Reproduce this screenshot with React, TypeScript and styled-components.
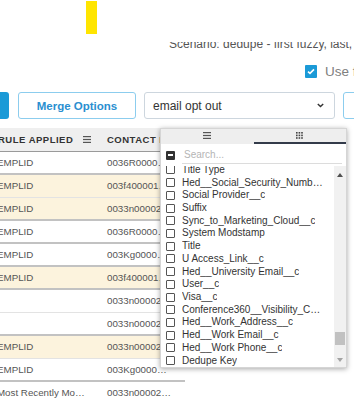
import React from 'react';
import styled, { createGlobalStyle } from 'styled-components';

const GlobalStyle = createGlobalStyle`
  html, body {
    margin: 0;
    padding: 0;
    background: #fff;
    overflow: hidden;
  }
  body {
    font-family: "Liberation Sans", Arial, sans-serif;
  }
`;

const Page = styled.div`
  position: relative;
  width: 354px;
  height: 400px;
  overflow: hidden;
`;

const TopArea = styled.div`
  height: 92px;
  display: flex;
  flex-direction: column;
`;

const Highlight = styled.div`
  margin: 1px 0 0 86px;
  width: 11px;
  height: 33px;
  background: #ffe500;
`;

const ScenarioClip = styled.div`
  margin: 8px 0 0 169px;
  height: 9px;
  overflow: hidden;
  white-space: nowrap;
`;

const ScenarioText = styled.div`
  margin-top: -5px;
  font-size: 12px;
  line-height: 14px;
  color: #555;
`;

const OptionRow = styled.label`
  display: flex;
  align-items: center;
  margin: 13px 0 0 305px;
  height: 14px;
  white-space: nowrap;
`;

const CheckBox = styled.span`
  flex-shrink: 0;
  width: 12px;
  height: 13px;
  border-radius: 1px;
  background: #1b9ad7;
  display: flex;
  align-items: center;
  justify-content: center;
`;

const OptionLabel = styled.span`
  margin-left: 8px;
  font-size: 13.5px;
  color: #808080;
`;

const Toolbar = styled.div`
  display: flex;
  gap: 8px;
  height: 27px;
  white-space: nowrap;
`;

const PrimaryStub = styled.div`
  flex-shrink: 0;
  width: 9px;
  margin-right: 1px;
  background: #1b9ad7;
  border-radius: 0 3px 3px 0;
`;

const OutlineButton = styled.div<{ $width: number }>`
  flex-shrink: 0;
  box-sizing: border-box;
  width: ${p => p.$width}px;
  border: 1px solid #8ccdee;
  border-radius: 3px;
  display: flex;
  align-items: center;
  justify-content: center;
  color: #2a8fd0;
  font-size: 11.5px;
  font-weight: bold;
`;

const Select = styled.div`
  flex-shrink: 0;
  box-sizing: border-box;
  width: 191px;
  border: 1px solid #cdd6de;
  border-radius: 3px;
  padding: 0 10px 0 8px;
  display: flex;
  align-items: center;
  justify-content: space-between;
  font-size: 12px;
  color: #333;
`;

const Grid = styled.div`
  margin: 9px 0 0 -11px;
  width: 196px;
`;

const HeaderRow = styled.div`
  display: grid;
  grid-template-columns: 109px 87px;
  box-sizing: border-box;
  height: 24px;
  background: #efefef;
  border-bottom: 1px solid #9a9a9a;
`;

const HeaderCell = styled.div<{ $second?: boolean }>`
  display: flex;
  align-items: center;
  justify-content: space-between;
  padding: ${p => (p.$second ? '0 4px 0 9px' : '0 7px 0 9px')};
  font-size: 9.5px;
  font-weight: bold;
  letter-spacing: 0.5px;
  text-transform: uppercase;
  color: #333;
  white-space: nowrap;
  overflow: hidden;
`;

const Row = styled.div<{ $master?: boolean; $groupEnd?: boolean }>`
  display: grid;
  grid-template-columns: 109px 87px;
  box-sizing: border-box;
  height: 23px;
  background: ${p => (p.$master ? '#fcf3dd' : '#fff')};
  border-bottom: ${p => (p.$groupEnd ? '2px solid #c2c2c2' : '1px solid #e3e3e3')};
`;

const Cell = styled.div<{ $second?: boolean }>`
  padding: ${p => (p.$second ? '0 13px 0 9px' : '0 8px')};
  line-height: 22px;
  font-size: 9.75px;
  color: #555;
  white-space: nowrap;
  overflow: hidden;
  text-overflow: ellipsis;
`;

const ColumnMenu = styled.div`
  position: absolute;
  left: 160px;
  top: 128px;
  width: 187px;
  height: 240px;
  box-sizing: border-box;
  background: #fff;
  border: 1px solid #d5d5d5;
  box-shadow: 0 1px 5px rgba(0, 0, 0, 0.35);
  display: flex;
  flex-direction: column;
`;

const TabBar = styled.div`
  display: flex;
  height: 15px;
  background: #eeeeee;
`;

const Tab = styled.div<{ $active?: boolean }>`
  flex: 1;
  display: flex;
  align-items: center;
  justify-content: center;
  border-bottom: 2px solid ${p => (p.$active ? '#333b4a' : 'transparent')};
`;

const SearchRow = styled.div`
  display: flex;
  align-items: center;
  height: 22px;
  padding: 0 4px 0 5px;
`;

const SelectAll = styled.span`
  flex-shrink: 0;
  width: 9px;
  height: 9px;
  border-radius: 1px;
  background: #333;
  display: flex;
  align-items: center;
  justify-content: center;

  &::after {
    content: '';
    width: 5px;
    height: 1.5px;
    background: #fff;
  }
`;

const SearchInput = styled.input`
  flex: 1;
  min-width: 0;
  margin-left: 7px;
  height: 17px;
  padding: 0 2px;
  border: none;
  border-bottom: 1px solid #dcdcdc;
  outline: none;
  background: transparent;
  font-family: inherit;
  font-size: 10px;
  color: #333;

  &::placeholder {
    color: #b5b5b5;
  }
`;

const ListArea = styled.div`
  flex: 1;
  min-height: 0;
  display: flex;
`;

const ListViewport = styled.div`
  flex: 1;
  min-width: 0;
  overflow: hidden;
  padding-left: 5px;
`;

const ListInner = styled.div`
  margin-top: -2.5px;
`;

const Item = styled.div`
  display: flex;
  align-items: center;
  height: 12.72px;
  padding-right: 9px;
  font-size: 10px;
  line-height: 12px;
  color: #333;
  white-space: nowrap;
`;

const ItemBox = styled.span`
  flex-shrink: 0;
  box-sizing: border-box;
  width: 9px;
  height: 9px;
  margin-right: 7px;
  border: 1px solid #555;
  border-radius: 1px;
  background: #fff;
`;

const ItemText = styled.span`
  overflow: hidden;
  text-overflow: ellipsis;
`;

const Scrollbar = styled.div`
  width: 12px;
  background: #f1f1f1;
  display: flex;
  flex-direction: column;
`;

const Arrow = styled.div<{ $down?: boolean }>`
  height: ${p => (p.$down ? 14 : 18)}px;
  display: flex;
  align-items: center;
  justify-content: center;

  &::after {
    content: '';
    border-left: 3.5px solid transparent;
    border-right: 3.5px solid transparent;
    ${p =>
      p.$down
        ? 'border-top: 4px solid #a3a3a3;'
        : 'border-bottom: 4px solid #505050;'}
  }
`;

const Track = styled.div`
  flex: 1;
  display: flex;
  flex-direction: column;
  justify-content: flex-end;
  padding-bottom: 8px;
`;

const Thumb = styled.div`
  height: 13px;
  margin: 0 1px;
  background: #c1c1c1;
`;

const MenuIcon = ({ color = '#555' }: { color?: string }) => (
  <svg width="8" height="7" viewBox="0 0 8 7">
    <rect x="0" y="0" width="8" height="1.2" fill={color} />
    <rect x="0" y="2.9" width="8" height="1.2" fill={color} />
    <rect x="0" y="5.8" width="8" height="1.2" fill={color} />
  </svg>
);

const GridIcon = () => (
  <svg width="7" height="7" viewBox="0 0 7 7">
    {[0, 1, 2].map(r =>
      [0, 1, 2].map(c => (
        <rect key={`${r}-${c}`} x={c * 2.6} y={r * 2.6} width="1.6" height="1.6" fill="#444" />
      ))
    )}
  </svg>
);

const rows = [
  { rule: 'EMPLID', id: '0036R00000AbCdEfGh', master: false, end: true },
  { rule: 'EMPLID', id: '003f400001XyZaBcDe', master: true, end: false },
  { rule: 'EMPLID', id: '0033n00002QwErTyUi', master: true, end: true },
  { rule: 'EMPLID', id: '0036R00000LkJhGfDs', master: false, end: true },
  { rule: 'EMPLID', id: '003Kg00000PoIuYtRe', master: false, end: true },
  { rule: 'EMPLID', id: '003f400001MnBvCxZa', master: true, end: true },
  { rule: '', id: '0033n00002AsDfGhJk', master: false, end: false },
  { rule: '', id: '0033n00002ZxCvBnMq', master: false, end: true },
  { rule: 'EMPLID', id: '0033n00002WeRtYuIo', master: true, end: false },
  { rule: 'EMPLID', id: '003Kg00000PlOkIjUh', master: false, end: true },
  { rule: 'Most Recently Modified', id: '0033n00002YgTfRdEs', master: false, end: false },
];

const columns = [
  'Title Type',
  'Hed__Social_Security_Number__c',
  'Social Provider__c',
  'Suffix',
  'Sync_to_Marketing_Cloud__c',
  'System Modstamp',
  'Title',
  'U Access_Link__c',
  'Hed__University Email__c',
  'User__c',
  'Visa__c',
  'Conference360__Visibility_Conference__c',
  'Hed__Work_Address__c',
  'Hed__Work Email__c',
  'Hed__Work Phone__c',
  'Dedupe Key',
];

const App: React.FC = () => {
  return (
    <Page>
      <GlobalStyle />
      <TopArea>
        <Highlight />
        <ScenarioClip>
          <ScenarioText>Scenario: dedupe - first fuzzy, last, email exact</ScenarioText>
        </ScenarioClip>
        <OptionRow>
          <CheckBox>
            <svg width="8" height="7" viewBox="0 0 8 7">
              <polyline points="1,3.6 3,5.4 7,1.4" fill="none" stroke="#fff" strokeWidth="1.6" />
            </svg>
          </CheckBox>
          <OptionLabel>Use fuzzy matching</OptionLabel>
        </OptionRow>
      </TopArea>

      <Toolbar>
        <PrimaryStub />
        <OutlineButton $width={118}>Merge Options</OutlineButton>
        <Select>
          <span>email opt out</span>
          <svg width="7" height="5" viewBox="0 0 7 5">
            <polyline points="0.8,0.9 3.5,3.6 6.2,0.9" fill="none" stroke="#333" strokeWidth="1.4" />
          </svg>
        </Select>
        <OutlineButton $width={60} />
      </Toolbar>

      <Grid>
        <HeaderRow>
          <HeaderCell>
            <span>Rule Applied</span>
            <MenuIcon />
          </HeaderCell>
          <HeaderCell $second>
            <span>Contact ID</span>
          </HeaderCell>
        </HeaderRow>
        {rows.map((r, i) => (
          <Row key={i} $master={r.master} $groupEnd={r.end}>
            <Cell>{r.rule}</Cell>
            <Cell $second>{r.id}</Cell>
          </Row>
        ))}
      </Grid>

      <ColumnMenu>
        <TabBar>
          <Tab>
            <MenuIcon />
          </Tab>
          <Tab $active>
            <GridIcon />
          </Tab>
        </TabBar>
        <SearchRow>
          <SelectAll />
          <SearchInput placeholder="Search..." />
        </SearchRow>
        <ListArea>
          <ListViewport>
            <ListInner>
              {columns.map(c => (
                <Item key={c}>
                  <ItemBox />
                  <ItemText>{c}</ItemText>
                </Item>
              ))}
            </ListInner>
          </ListViewport>
          <Scrollbar>
            <Arrow />
            <Track>
              <Thumb />
            </Track>
            <Arrow $down />
          </Scrollbar>
        </ListArea>
      </ColumnMenu>
    </Page>
  );
};

export default App;
